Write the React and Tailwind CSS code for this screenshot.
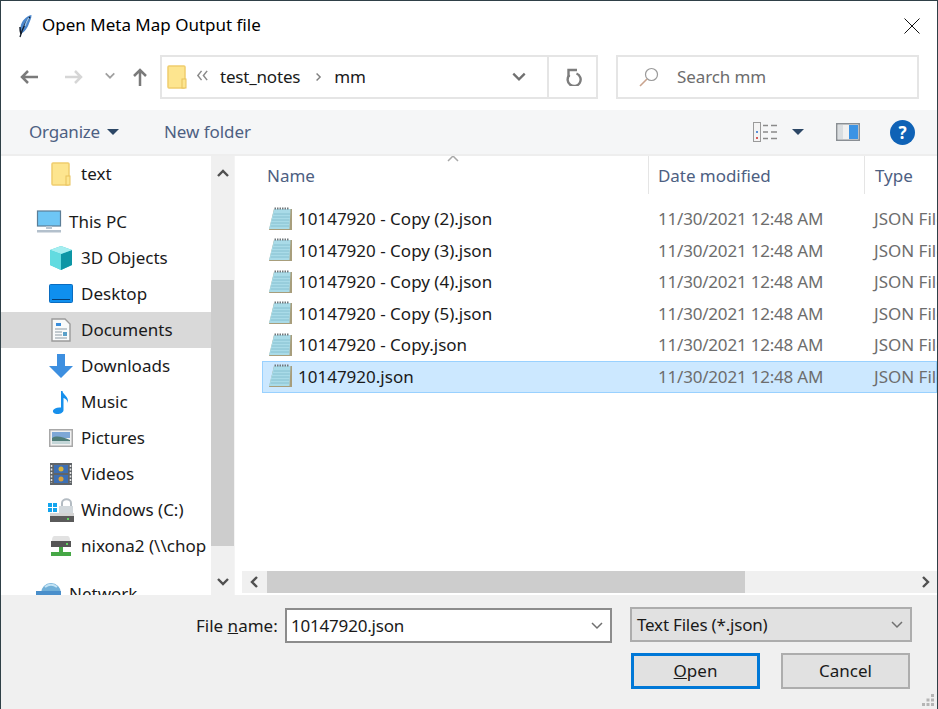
const Folder = ({ className = 'w-[20px] h-[24px]' }) => (
  <svg viewBox="0 0 20 24" className={className}>
    <rect x="1" y="1" width="17" height="22" rx="1" fill="#fde58f" stroke="#efcd6e" strokeWidth="1.5" />
    <rect x="15" y="14" width="4" height="9" fill="#fde58f" stroke="#e8c25c" strokeWidth="1" />
  </svg>
)

const Feather = () => (
  <svg viewBox="0 0 16 24" className="w-[16px] h-[24px]">
    <path d="M14.500 1C9 2 4.500 7 3.500 13c-.5 3-.5 5 .5 6.500 3-1 6.500-5 8-10 1-3 2.500-5 2.500-8.500z" fill="#4a86cc" />
    <path d="M13 3C9 7 6 13 3 23" stroke="#16202e" strokeWidth="1.3" fill="none" />
    <path d="M3 13c0 3 0 5 1 7" stroke="#141c28" strokeWidth="1.500" fill="none" />
    <path d="M12 4c-2 2-3 5-4 8" stroke="#9cc6ee" strokeWidth="1.300" fill="none" />
  </svg>
)

const Monitor = () => (
  <svg viewBox="0 0 26 24" className="w-[26px] h-[24px]">
    <rect x="1.500" y="1" width="23" height="15" fill="#6ec6f5" stroke="#5b7d96" strokeWidth="1.200" />
    <rect x="10" y="16" width="6" height="3" fill="#b9c6d1" />
    <rect x="1" y="20" width="24" height="2.500" fill="#b3c0cc" />
  </svg>
)

const Cube = () => (
  <svg viewBox="0 0 24 24" className="w-[24px] h-[24px]">
    <path d="M12 0l11 4v15l-11 5L1 19V4z" fill="#49cdd6" />
    <path d="M12 8l11-4v15l-11 5z" fill="#0d96a5" />
    <path d="M1 4l11-4 11 4-11 4z" fill="#a5eef0" />
    <path d="M1 4l11 4v16L1 19z" fill="#62dbe0" />
  </svg>
)

const Desktop = () => (
  <svg viewBox="0 0 24 20" className="w-[24px] h-[20px]">
    <rect x="0.500" y="0.500" width="23" height="18" rx="1" fill="#0f8fee" stroke="#0a6cc0" />
    <rect x="3" y="15" width="18" height="1" fill="#063e75" />
  </svg>
)

const Documents = () => (
  <svg viewBox="0 0 20 24" className="w-[20px] h-[24px]">
    <path d="M1 1h13l5 5v17H1z" fill="#f9fafa" stroke="#9a9a9a" strokeWidth="1.400" />
    <rect x="5" y="5" width="5" height="3" fill="#3a8edb" />
    <path d="M4 11h12M4 14h7M4 17h7M4 20h12" stroke="#8c9aa3" strokeWidth="1.200" />
    <rect x="12" y="14" width="4" height="4" fill="#5aa0c8" />
  </svg>
)

const DownArrow = () => (
  <svg viewBox="0 0 24 24" className="w-[24px] h-[24px]">
    <path d="M8 0h8v12h8L12 24 0 12h8z" fill="#3d8fe0" />
  </svg>
)

const Music = () => (
  <svg viewBox="0 0 18 24" className="w-[18px] h-[24px]">
    <path d="M9 1l1.500 0c.5 4 6.500 5 5.500 12-.5-3-3-4.500-4.500-5v12c0 2.500-3 4-6 4s-5-1.500-4.500-3.500S5 17 9 17.500z" fill="#1790ec" />
  </svg>
)

const Pictures = () => (
  <svg viewBox="0 0 24 18" className="w-[24px] h-[18px]">
    <rect x="0.750" y="0.750" width="22.500" height="16.500" fill="#f1f1f1" stroke="#a8a8a8" strokeWidth="1.500" />
    <rect x="3" y="3" width="18" height="6" fill="#7da7d6" />
    <path d="M3 9c5-3 10-1 18 2v4H3z" fill="#4f7d78" />
    <rect x="3" y="12" width="18" height="3" fill="#c4d6d8" />
  </svg>
)

const Videos = () => (
  <svg viewBox="0 0 22 22" className="w-[22px] h-[22px]">
    <rect width="22" height="22" fill="#5f6468" />
    <path d="M1.500 2v18M20.500 2v18" stroke="#e5e5e5" strokeWidth="1.500" strokeDasharray="2 1.500" />
    <rect x="4" y="2" width="14" height="8" fill="#3d6fb3" />
    <rect x="4" y="12" width="14" height="8" fill="#3d6fb3" />
    <circle cx="11" cy="6" r="2.500" fill="#d9b23a" />
    <circle cx="11" cy="16" r="2.500" fill="#d9a03a" />
  </svg>
)

const WindowsDrive = () => (
  <svg viewBox="0 0 26 24" className="w-[26px] h-[24px]">
    <path d="M0 5h4v4H0zM5 5h4v4H5zM0 10h4v4H0zM5 10h4v4H5z" fill="#13a5ee" />
    <path d="M14 9V5c0-5 9-5 9 0v4" fill="none" stroke="#b4bcc3" strokeWidth="2" />
    <rect x="11" y="8" width="14" height="7" fill="#d2d8dc" />
    <rect x="2" y="15" width="24" height="3" fill="#d4d4d4" />
    <rect x="2" y="18" width="24" height="6" fill="#5a5a5a" />
    <rect x="19" y="20" width="2" height="2" fill="#5fd35f" />
  </svg>
)

const NetDrive = () => (
  <svg viewBox="0 0 22 22" className="w-[22px] h-[22px]">
    <path d="M2 6c0-4 1-5 3-5h12c2 0 3 1 3 5z" fill="#e2e2e2" />
    <rect x="1" y="6" width="20" height="6" fill="#555" />
    <rect x="16" y="8" width="2" height="2" fill="#5fd35f" />
    <rect x="9" y="12" width="4" height="5" fill="#46a846" />
    <rect x="1" y="17" width="20" height="4" fill="#46a846" />
  </svg>
)

const Globe = () => (
  <svg viewBox="0 0 26 24" className="w-[26px] h-[24px]">
    <circle cx="15" cy="11" r="10" fill="#72b0d8" />
    <path d="M9 5c4-3 8-3 12 0" stroke="#c4e4f5" strokeWidth="2" fill="none" />
    <rect x="0" y="9" width="25" height="4" fill="#4a8fcb" />
  </svg>
)

const Notepad = () => (
  <svg viewBox="0 0 26 25" className="w-[26px] h-[25px] shrink-0">
    <path d="M6 2h18v21H1z" fill="#a89e7c" />
    <path d="M6 2h16.500L21.500 22H1z" fill="#a9dbe8" />
    <path d="M5.500 7h16.500M4.800 10h17M4 13h17.500M3.200 16h18M2.500 19h18.500" stroke="#86c0d0" strokeWidth="1" />
    <path d="M6.500 1.500h15" stroke="#6f777b" strokeWidth="2" strokeDasharray="1.500 1" />
  </svg>
)

const Chevron = ({ dir = 'down', className = '', color = '#606060', w = 2 }) => {
  const d = {
    down: 'M2 4l5 5 5-5',
    up: 'M2 9l5-5 5 5',
    left: 'M9 2L4 7l5 5',
    right: 'M5 2l5 5-5 5',
    dbl: 'M6 2L2 7l4 5M12 2L8 7l4 5',
  }[dir]
  return (
    <svg viewBox="0 0 14 14" className={className}>
      <path d={d} fill="none" stroke={color} strokeWidth={w} />
    </svg>
  )
}

const SIDEBAR = [
  { name: 'This PC', icon: <Monitor />, top: true },
  { name: '3D Objects', icon: <Cube /> },
  { name: 'Desktop', icon: <Desktop /> },
  { name: 'Documents', icon: <Documents />, active: true },
  { name: 'Downloads', icon: <DownArrow /> },
  { name: 'Music', icon: <Music /> },
  { name: 'Pictures', icon: <Pictures /> },
  { name: 'Videos', icon: <Videos /> },
  { name: 'Windows (C:)', icon: <WindowsDrive /> },
  { name: 'nixona2 (\\\\chop', icon: <NetDrive /> },
]

const FILES = [
  '10147920 - Copy (2).json',
  '10147920 - Copy (3).json',
  '10147920 - Copy (4).json',
  '10147920 - Copy (5).json',
  '10147920 - Copy.json',
  '10147920.json',
]

function SideRow({ item }) {
  return (
    <div className={`flex items-center h-[36px] ${item.top ? 'pl-[35px] mt-[12px]' : 'pl-[47px]'} ${item.active ? 'bg-[#d9d9d9]' : ''}`}>
      <div className="w-[26px] mr-[7px] flex items-center justify-center shrink-0">{item.icon}</div>
      <span className="whitespace-nowrap text-[#1a1a1a] mb-[2px]">{item.name}</span>
    </div>
  )
}

export default function App() {
  return (
    <div className="w-[938px] h-[709px] overflow-hidden bg-white flex flex-col border-x border-t border-[#2f4047] text-[17px] leading-none" style={{ fontFamily: '"Noto Sans", "Open Sans", sans-serif' }}>
      {/* title bar */}
      <div className="h-[49px] flex items-center shrink-0 pl-[16px] pr-[16px]">
        <Feather />
        <span className="ml-[9px] text-black mb-[2px]">Open Meta Map Output file</span>
        <svg viewBox="0 0 16 16" className="w-[16px] h-[16px] ml-auto mr-[1px]">
          <path d="M.5.5l15 15M15.500.5l-15 15" stroke="#111" strokeWidth="1" />
        </svg>
      </div>

      {/* nav row */}
      <div className="h-[60px] shrink-0 flex items-start pt-[5px]">
        <div className="w-[159px] flex items-center h-[44px] pl-[18px] shrink-0">
          <svg viewBox="0 0 20 16" className="w-[20px] h-[16px]">
            <path d="M19 8H3M9 2L3 8l6 6" fill="none" stroke="#7a7a7a" strokeWidth="2.500" />
          </svg>
          <svg viewBox="0 0 20 16" className="w-[20px] h-[16px] ml-[25px]">
            <path d="M1 8h16M11 2l6 6-6 6" fill="none" stroke="#d6d6d6" strokeWidth="2.500" />
          </svg>
          <Chevron className="w-[12px] h-[12px] ml-[20px] mb-[3px]" color="#a0a0a0" />
          <svg viewBox="0 0 16 20" className="w-[16px] h-[20px] ml-[16px]">
            <path d="M8 19V3M2 9l6-6 6 6" fill="none" stroke="#7a7a7a" strokeWidth="2.500" />
          </svg>
        </div>
        <div className="w-[438px] h-[44px] border-2 border-[#e5e5e5] flex items-center shrink-0">
          <div className="ml-[5px]"><Folder /></div>
          <Chevron dir="dbl" className="w-[13px] h-[13px] ml-[9px] mb-[3px]" color="#8a8a8a" w={1.600} />
          <span className="ml-[11px] text-[#1a1a1a] mb-[2px] tracking-[-0.2px]">test_notes</span>
          <Chevron dir="right" className="w-[10px] h-[10px] ml-[13px]" color="#808080" />
          <span className="ml-[11px] text-[#1a1a1a] mb-[2px]">mm</span>
          <Chevron className="w-[16px] h-[16px] ml-auto mr-[20px]" color="#707070" />
          <div className="w-[49px] h-full border-l-2 border-[#e5e5e5] flex items-center justify-center shrink-0">
            <svg viewBox="0 0 16 18" className="w-[16px] h-[18px] ml-[2px]">
              <path d="M3.500 7a6.500 6.500 0 1 0 7-1.500" fill="none" stroke="#7d7d7d" strokeWidth="2.400" />
              <path d="M11 2H2.500v7" fill="none" stroke="#7d7d7d" strokeWidth="2.400" />
            </svg>
          </div>
        </div>
        <div className="ml-[18px] w-[303px] h-[44px] border-2 border-[#e5e5e5] flex items-center shrink-0 pl-[21px]">
          <svg viewBox="0 0 20 20" className="w-[20px] h-[20px]">
            <circle cx="12.500" cy="7.500" r="6" fill="none" stroke="#9a9a9a" strokeWidth="1.200" />
            <path d="M8 12l-7 7" stroke="#c9a48e" strokeWidth="1.600" />
          </svg>
          <span className="ml-[18px] text-[#6d6d6d] mb-[2px] tracking-[-0.1px]">Search mm</span>
        </div>
      </div>

      {/* toolbar */}
      <div className="h-[46px] shrink-0 bg-[#f5f6f7] border-b-2 border-[#eeeeee] flex items-center pl-[28px]">
        <span className="text-[#4d6082] mb-[2px] tracking-[-0.2px]">Organize</span>
        <svg viewBox="0 0 12 6" className="w-[12px] h-[6px] ml-[7px]"><path d="M0 0h12L6 6z" fill="#2c4766" /></svg>
        <span className="ml-[45px] text-[#4d6082] mb-[2px] tracking-[-0.05px]">New folder</span>
        <div className="ml-auto flex items-center pr-[22px]">
          <svg viewBox="0 0 26 20" className="w-[26px] h-[20px]">
            <rect x="0.500" y="0.500" width="7" height="19" fill="#f4f4f4" stroke="#9a9a9a" />
            <path d="M10 3.500h5M18 3.500h6M10 10h5M18 10h6M10 16.500h5M18 16.500h6" stroke="#8a8a8a" strokeWidth="1.400" />
            <rect x="3" y="9" width="2" height="2" fill="#5b8fd6" />
            <rect x="3" y="15" width="2" height="2" fill="#d65b5b" />
          </svg>
          <svg viewBox="0 0 12 6" className="w-[12px] h-[6px] ml-[13px]"><path d="M0 0h12L6 6z" fill="#2c4766" /></svg>
          <svg viewBox="0 0 24 18" className="w-[24px] h-[18px] ml-[32px]">
            <rect x="0.750" y="0.750" width="22.500" height="16.500" fill="#f0f0f0" stroke="#8a8f94" strokeWidth="1.500" />
            <rect x="13" y="2" width="9" height="14" fill="#3b93e4" />
            <rect x="2" y="2" width="5" height="14" fill="#d9dde0" />
          </svg>
          <div className="ml-[30px] w-[25px] h-[25px] rounded-full bg-[#0f62b6] flex items-center justify-center text-white font-bold text-[17px]">?</div>
        </div>
      </div>

      {/* main */}
      <div className="h-[439px] shrink-0 flex overflow-hidden">
        <div className="w-[210px] shrink-0 overflow-hidden">
          <div className="flex items-center h-[36px] pl-[47px]">
            <div className="w-[26px] mr-[7px] flex items-center justify-center shrink-0"><Folder /></div>
            <span className="text-[#1a1a1a] mb-[2px]">text</span>
          </div>
          {SIDEBAR.map(item => <SideRow key={item.name} item={item} />)}
          <div className="flex items-center h-[36px] pl-[35px] mt-[12px]">
            <div className="w-[26px] mr-[7px] shrink-0"><Globe /></div>
            <span className="text-[#1a1a1a] mb-[2px]">Network</span>
          </div>
        </div>

        {/* sidebar scrollbar */}
        <div className="w-[23px] shrink-0 bg-[#f0f0f0] flex flex-col">
          <div className="h-[36px] flex items-center justify-center">
            <Chevron dir="up" className="w-[14px] h-[14px]" color="#505050" w={2.400} />
          </div>
          <div className="h-[88px]" />
          <div className="h-[266px] bg-[#cdcdcd]" />
          <div className="flex-1 flex items-center justify-center pt-[22px]">
            <Chevron className="w-[14px] h-[14px]" color="#505050" w={2.400} />
          </div>
        </div>
        <div className="w-[7px] shrink-0 bg-white border-l border-[#f4f4f4]" />

        <div className="flex-1 min-w-0 flex flex-col overflow-hidden relative">
          {/* headers */}
          <div className="h-[38px] shrink-0 flex text-[#4d6082]">
            <div className="w-[408px] shrink-0 pl-[26px] pt-[11px] border-r border-[#e5e5e5] relative">
              Name
              <Chevron dir="up" className="absolute left-[205px] top-[-4px] w-[14px] h-[14px]" color="#a8a8a8" w={1.500} />
            </div>
            <div className="w-[216px] shrink-0 pl-[9px] pt-[11px] border-r border-[#e5e5e5] tracking-[-0.05px]">Date modified</div>
            <div className="pl-[10px] pt-[11px]">Type</div>
          </div>
          {/* rows */}
          <div className="pt-[9.500px] flex-1 min-h-0">
            {FILES.map((f, i) => (
              <div key={f} className={`flex items-center h-[31.500px] ml-[21px] whitespace-nowrap border ${i === 5 ? 'bg-[#cce8ff] border-[#99d1ff]' : 'border-transparent'}`}>
                <div className="w-[35px] pl-[5px] shrink-0"><Notepad /></div>
                <span className="w-[360px] shrink-0 text-[#1a1a1a] mb-[1px]">{f}</span>
                <span className="w-[216px] shrink-0 text-[#6d6d6d] mb-[1px] tracking-[-0.2px]">11/30/2021 12:48 AM</span>
                <span className="text-[#6d6d6d] mb-[1px]">JSON File</span>
              </div>
            ))}
          </div>
          {/* horizontal scrollbar */}
          <div className="h-[22px] shrink-0 mb-[2px] ml-[1px] bg-[#f0f0f0] flex">
            <div className="w-[25px] flex items-center justify-center">
              <Chevron dir="left" className="w-[14px] h-[14px]" color="#505050" w={2.400} />
            </div>
            <div className="w-[478px] bg-[#cdcdcd]" />
            <div className="ml-auto w-[24px] flex items-center justify-center">
              <Chevron dir="right" className="w-[14px] h-[14px]" color="#505050" w={2.400} />
            </div>
          </div>
        </div>
      </div>

      {/* bottom panel */}
      <div className="flex-1 bg-[#f0f0f0] relative pl-[195px] pt-[13px]">
        <div className="flex items-start">
          <span className="w-[89px] shrink-0 text-[#1a1a1a] pt-[9px]">File <span className="underline">n</span>ame:</span>
          <div className="w-[327px] h-[35px] bg-white border-2 border-[#8c8c8c] flex items-center pl-[4px] text-[#1a1a1a] shrink-0">
            <span className="tracking-[-0.2px]">10147920.json</span>
            <Chevron className="w-[14px] h-[14px] ml-auto mr-[6px]" color="#707070" w={1.500} />
          </div>
          <div className="ml-[18px] w-[282px] h-[35px] -mt-[1px] bg-[#e1e1e1] border-2 border-[#adadad] flex items-center pl-[5px] text-[#1a1a1a] shrink-0">
            <span className="tracking-[-0.2px]">Text Files (*.json)</span>
            <Chevron className="w-[14px] h-[14px] ml-auto mr-[6px]" color="#707070" w={1.500} />
          </div>
        </div>
        <div className="flex mt-[10px] ml-[435px]">
          <button className="w-[129px] h-[36px] pb-[2px] bg-[#e1e1e1] border-[3px] border-[#0078d7] text-[#1a1a1a]"><span className="underline">O</span>pen</button>
          <button className="w-[129px] h-[36px] pb-[2px] ml-[21px] bg-[#e1e1e1] border-2 border-[#adadad] text-[#1a1a1a]">Cancel</button>
        </div>
        <svg viewBox="0 0 12 12" className="absolute right-[3px] bottom-[3px] w-[12px] h-[12px]">
          <path d="M9 0h3v3H9zM4.500 4.500h3v3h-3zM9 4.500h3v3H9zM0 9h3v3H0zM4.500 9h3v3h-3zM9 9h3v3H9z" fill="#b5b5b5" />
        </svg>
      </div>
    </div>
  )
}
